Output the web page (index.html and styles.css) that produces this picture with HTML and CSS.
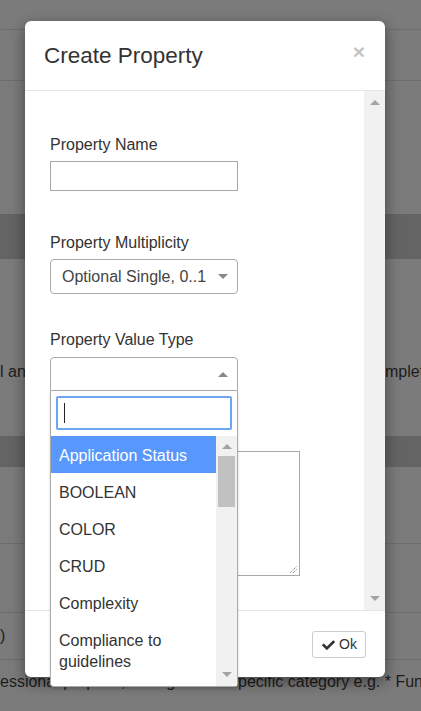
FILE: index.html
```html
<!DOCTYPE html>
<html>
<head>
<meta charset="utf-8">
<link rel="stylesheet" href="styles.css">
</head>
<body>
<div class="page">
  <div class="bg-row r1"></div>
  <div class="bg-row r2"></div>
  <div class="bg-row r3"></div>
  <div class="bg-band b1"></div>
  <div class="bg-row r4 split split-a"><span class="cell">l and status of all items</span><span class="cell">mpleted</span></div>
  <div class="bg-band b2"></div>
  <div class="bg-row r5"></div>
  <div class="bg-row r6"></div>
  <div class="bg-row r7"><span>)</span></div>
  <div class="bg-row r8 split split-b"><span class="cell">essional purpose, for a given s</span><span class="cell">pecific category e.g. * Functional</span></div>
</div>

<div class="modal">
  <div class="modal-header">
    <h4 class="modal-title">Create Property</h4>
    <span class="close">×</span>
  </div>
  <div class="modal-body">
    <div class="body-content">
      <div class="form-group fg-first">
        <label class="lbl">Property Name</label>
        <div class="input"></div>
      </div>
      <div class="form-group fg-second">
        <label class="lbl">Property Multiplicity</label>
        <div class="select">
          <span>Optional Single, 0..1</span>
          <span class="caret-down"></span>
        </div>
      </div>
      <div class="form-group fg-third">
        <label class="lbl lbl-s2">Property Value Type</label>
        <div class="s2">
          <div class="s2-selection">
            <span class="caret-up"></span>
          </div>
          <div class="s2-dropdown">
            <div class="s2-search-wrap">
              <div class="s2-search"><span class="text-cursor"></span></div>
            </div>
            <div class="s2-results">
              <ul class="s2-list">
                <li class="opt active">Application Status</li>
                <li class="opt">BOOLEAN</li>
                <li class="opt">COLOR</li>
                <li class="opt">CRUD</li>
                <li class="opt">Complexity</li>
                <li class="opt">Compliance to guidelines</li>
                <li class="opt">Cost</li>
              </ul>
              <div class="sb sb-small">
                <span class="arrow-up"></span>
                <div class="sb-track"><div class="sb-thumb"></div></div>
                <span class="arrow-down"></span>
              </div>
            </div>
          </div>
        </div>
      </div>
      <div class="form-group">
        <label class="lbl">Property Description</label>
        <div class="textarea">
          <svg class="grip" width="8" height="8" viewBox="0 0 8 8"><path d="M1 8 L8 1 M4 8 L8 4" stroke="#666" stroke-width="1" fill="none" stroke-dasharray="1 1"/></svg>
        </div>
      </div>
    </div>
    <div class="sb sb-body">
      <span class="arrow-up"></span>
      <div class="sb-track"></div>
      <span class="arrow-down"></span>
    </div>
  </div>
  <div class="modal-footer">
    <button class="btn">
      <svg class="check" width="13" height="11" viewBox="0 0 512 440"><path d="M173.9 431.4l-166.4-166.4c-10-10-10-26.2 0-36.2l36.2-36.2c10-10 26.2-10 36.2 0L192 304.7 432.1 64.6c10-10 26.2-10 36.2 0l36.2 36.2c10 10 10 26.2 0 36.2l-294.4 294.4c-10 10-26.2 10-36.2 0z" fill="#333"/></svg>
      <span>Ok</span>
    </button>
  </div>
</div>
</body>
</html>
```
FILE: styles.css
```css
* { box-sizing: border-box; }
html, body {
  margin: 0;
  padding: 0;
}
body {
  width: 421px;
  height: 711px;
  overflow: hidden;
  position: relative;
  background: #7b7b7b;
  font-family: "Liberation Sans", Arial, sans-serif;
  font-size: 16px;
  color: #333;
}

/* dimmed page behind the modal */
.page { width: 421px; }
.bg-row {
  border-bottom: 1px solid #6e6e6e;
  color: #1d1d1d;
  line-height: 20px;
  white-space: nowrap;
  overflow: hidden;
}
.bg-band { background: #646464; }
.r1 { height: 30px; }
.r2 { height: 51px; }
.r3 { height: 133px; border-bottom: none; }
.b1 { height: 45px; }
.r4 { height: 177px; padding-top: 103px; border-bottom: none; }
.b2 { height: 31px; }
.r5 { height: 77px; }
.r6 { height: 69px; }
.r7 { height: 47px; padding-top: 13px; }
.r8 { height: 52px; padding-top: 12px; border-bottom: none; }
.split { display: grid; }
.split .cell { overflow: hidden; white-space: nowrap; }
.split-a { grid-template-columns: 385px 60px; }
.split-b { grid-template-columns: 238px 200px; }

/* modal */
.modal {
  position: absolute;
  top: 21px;
  left: 25px;
  width: 360px;
  height: 656px;
  background: #fff;
  border-radius: 6px;
  box-shadow: 0 5px 15px rgba(0,0,0,0.45);
  display: flex;
  flex-direction: column;
}
.modal-header {
  display: flex;
  justify-content: space-between;
  align-items: flex-start;
  padding: 22px 20px 22px 19px;
  border-bottom: 1px solid #e5e5e5;
}
.modal-title {
  margin: 0;
  font-size: 22.5px;
  font-weight: normal;
  line-height: 25px;
  color: #333;
}
.close {
  font-size: 21px;
  font-weight: bold;
  line-height: 21px;
  color: #c4c4c4;
  margin-top: -2px;
}
.modal-body {
  height: 519px;
  display: flex;
  overflow: visible;
}
.body-content {
  flex: 1;
  padding: 44px 0 0 25px;
}
.form-group { margin-bottom: 34px; }
.fg-first { margin-bottom: 42px; }
.fg-second { margin-bottom: 36px; }
.fg-third { margin-bottom: 34px; }
.lbl {
  display: block;
  line-height: 20px;
  margin-bottom: 6px;
  color: #333;
}
.lbl-s2 { margin-bottom: 7px; }
.input {
  width: 188px;
  height: 30px;
  border: 1px solid #a9a9a9;
}
.select {
  width: 188px;
  height: 35px;
  border: 1px solid #aaa;
  border-radius: 4px;
  padding: 0 9px 0 11px;
  display: flex;
  align-items: center;
  justify-content: space-between;
  color: #444;
}
.caret-down {
  width: 0; height: 0;
  border-style: solid;
  border-width: 5px 5px 0 5px;
  border-color: #888 transparent transparent transparent;
}
.caret-up {
  width: 0; height: 0;
  border-style: solid;
  border-width: 0 5px 5px 5px;
  border-color: transparent transparent #888 transparent;
}

/* select2 */
.s2 { position: relative; width: 188px; }
.s2-selection {
  height: 34px;
  border: 1px solid #aaa;
  border-radius: 4px 4px 0 0;
  display: flex;
  align-items: center;
  justify-content: flex-end;
  padding-right: 9px;
}
.s2-dropdown {
  position: absolute;
  top: 34px;
  left: 0;
  width: 188px;
  z-index: 5;
  background: #fff;
  border: 1px solid #aaa;
  border-top: none;
  border-radius: 0 0 4px 4px;
  box-shadow: 0 2px 3px rgba(0,0,0,0.15);
}
.s2-search-wrap { padding: 5px 5px 6px 5px; }
.s2-search {
  height: 34px;
  border: 2px solid #6fa3f6;
  border-radius: 2px;
  padding: 5px 0 0 6px;
}
.text-cursor {
  display: block;
  width: 1px;
  height: 20px;
  background: #222;
}
.s2-results {
  display: flex;
  height: 250px;
  overflow: hidden;
}
.s2-list {
  list-style: none;
  margin: 0;
  padding: 0;
  flex: 1;
  overflow: hidden;
}
.opt {
  padding: 9px 8px 7px 8px;
  line-height: 21px;
  color: #333;
}
.opt.active { background: #5897fb; color: #fff; }

/* scrollbars */
.sb {
  width: 21px;
  background: #f1f1f1;
  display: flex;
  flex-direction: column;
  align-items: center;
}
.sb-track { flex: 1; width: 100%; padding: 0 2px; }
.sb-thumb { height: 51px; background: #c1c1c1; }
.arrow-up, .arrow-down {
  width: 0; height: 0;
  border-style: solid;
}
.arrow-up {
  border-width: 0 5px 5px 5px;
  border-color: transparent transparent #a3a3a3 transparent;
  margin: 8px 0 7px;
}
.arrow-down {
  border-width: 5px 5px 0 5px;
  border-color: #a3a3a3 transparent transparent transparent;
  margin: 7px 0 9px;
}
.sb-body .arrow-up { margin-top: 9px; }
.sb-body .arrow-down { margin-bottom: 9px; }
.sb-body { height: 519px; }

.textarea {
  width: 250px;
  height: 125px;
  border: 1px solid #a9a9a9;
  position: relative;
}
.grip { position: absolute; right: 2px; bottom: 2px; }

.modal-footer {
  flex: 1;
  border-top: 1px solid #e5e5e5;
  display: flex;
  align-items: center;
  justify-content: flex-end;
  padding: 0 19px 0 19px;
}
.btn {
  height: 27px;
  padding: 0 8px 0 9px;
  border: 1px solid #ccc;
  border-radius: 3px;
  background: #fff;
  font-family: "Liberation Sans", Arial, sans-serif;
  font-size: 14px;
  color: #333;
  display: flex;
  align-items: center;
  gap: 4px;
}
```
